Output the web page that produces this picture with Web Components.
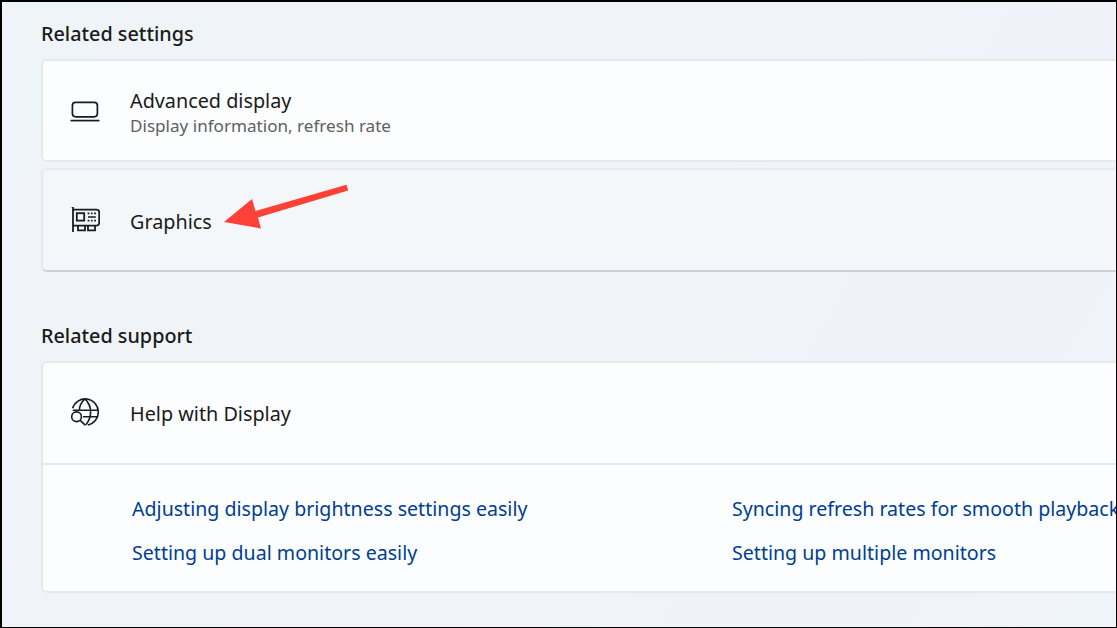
<!doctype html>
<html lang="en">
<head>
<meta charset="utf-8">
<title>Related settings</title>
<style>
  html, body { margin: 0; height: 100%; }
  body { overflow: hidden; font-family: "Noto Sans", "Open Sans", sans-serif; }
</style>
</head>
<body>
<settings-page>
  <section-title>Related settings</section-title>
  <setting-card>
    <setting-row title-text="Advanced display" sub-text="Display information, refresh rate">
      <svg slot="icon" viewBox="0 0 30 24" width="30" height="24" fill="none" stroke="#1b1b1b" stroke-width="1.7">
        <rect x="2.4" y="3.4" width="25" height="14.4" rx="3.2"/>
        <path d="M0.5 21.6H29.5"/>
      </svg>
    </setting-row>
  </setting-card>
  <setting-card class="hovered">
    <setting-row title-text="Graphics" class="nudge">
      <svg slot="icon" viewBox="0 2 30 28" width="30" height="28" fill="none" stroke="#1b1b1b" stroke-width="1.8">
        <path d="M0.5 1.4H3V27"/>
        <path d="M3 4.6H26.5Q29.2 4.6 29.2 7.4V18Q29.2 20.6 26.5 20.6H3"/>
        <path d="M8 20.6V25.4H15V20.6M18 20.6V25.4H25V20.6"/>
        <rect x="6.8" y="8.2" width="7.4" height="7.4"/>
        <path d="M17.6 8.4H19.4M21 8.4H22.6M24.2 8.4H26M18 12H25.8M17.6 15.6H19.4M21 15.6H22.6M24.2 15.6H26" stroke-width="1.7"/>
      </svg>
    </setting-row>
  </setting-card>
  <section-title class="second">Related support</section-title>
  <setting-card>
    <setting-row title-text="Help with Display">
      <svg slot="icon" viewBox="0 1 32 30" width="32" height="30" fill="none" stroke="#1b1b1b" stroke-width="1.7">
        <path d="M2.8 11A14 14 0 1 1 19 28.7"/>
        <path d="M16 1C12 4.5 10 9 10 13.5M16 1C20 5 22 10 22 15C22 20 20 25 17 28.5"/>
        <path d="M3 13H29.8M14 20H29.6"/>
        <circle cx="7" cy="20" r="5.2"/>
        <path d="M10.8 23.8L16.5 29.2"/>
      </svg>
    </setting-row>
    <link-grid>
      <a href="#">Adjusting display brightness settings easily</a>
      <a href="#">Syncing refresh rates for smooth playback</a>
      <a href="#">Setting up dual monitors easily</a>
      <a href="#">Setting up multiple monitors</a>
    </link-grid>
  </setting-card>
  <svg id="arrow" viewBox="0 0 1117 628" width="1117" height="628" aria-hidden="true">
    <path d="M346.5 184.8L348.2 190.6L258 217.5L261 228.5L224 222L252 199L255.5 211Z" fill="#fe4136"/>
  </svg>
</settings-page>

<script>
  /**
   * Defines a custom element from a piece of shadow markup.
   *
   * @param {string} name - The tag name.
   * @param {string} markup - The shadow root content.
   * @returns {void}
   */
  function define (name, markup) {
    const template = document.createElement('template')
    template.innerHTML = markup

    customElements.define(name, class extends HTMLElement {
      /**
       * Attaches the shadow root.
       */
      constructor () {
        super()
        this.attachShadow({ mode: 'open' }).appendChild(template.content.cloneNode(true))
      }
    })
  }

  define('settings-page', `
    <style>
      :host {
        display: block;
        position: relative;
        box-sizing: border-box;
        width: 1117px;
        height: 628px;
        padding: 17px 0 0 39px;
        overflow: hidden;
        border: solid #000;
        border-width: 2px 1px 1px 2px;
        background: linear-gradient(120deg, #eff4f8 0%, #f0f4f9 55%, #eff3fa 100%);
      }
      ::slotted(#arrow) { position: absolute; left: -2px; top: -2px; }
    </style>
    <slot></slot>
  `)

  define('section-title', `
    <style>
      :host {
        display: block;
        height: 40px;
        font-size: 19.8px;
        line-height: 30px;
        font-weight: 500;
        color: #1a1a1a;
        white-space: nowrap;
      }
      :host(.second) { margin-top: 51px; height: 38px; line-height: 26px; }
    </style>
    <slot></slot>
  `)

  define('setting-card', `
    <style>
      :host {
        display: block;
        box-sizing: border-box;
        width: 1120px;
        margin-bottom: 6px;
        background: #fcfdfe;
        border: 2px solid #e5e9ee;
        border-radius: 6px;
      }
      :host(.hovered) { background: #f4f7fa; border-color: #e6e9ed #e6e9ed #cdd0d4; }
    </style>
    <slot></slot>
  `)

  class SettingRow extends HTMLElement {
    /**
     * Builds the row from its attributes.
     */
    constructor () {
      super()
      this.attachShadow({ mode: 'open' }).innerHTML = `
        <style>
          :host {
            display: flex;
            align-items: center;
            box-sizing: border-box;
            height: 99px;
            padding-left: 27px;
            color: #1a1a1a;
          }
          :host(.nudge) { height: 100px; padding-top: 2px; }
          :host(:not([sub-text]):not(.nudge)) { height: 100px; }
          .icon { display: flex; justify-content: center; width: 30px; margin-right: 30px; }
          .text { padding-top: 5px; }
          .title { font-size: 19.8px; line-height: 25px; white-space: nowrap; }
          .sub { font-size: 17.1px; line-height: 25px; color: #5f5f5f; white-space: nowrap; }
          .text.single { padding-top: 0; }
        </style>
        <div class="icon"><slot name="icon"></slot></div>
        <div class="text ${this.hasAttribute('sub-text') ? '' : 'single'}">
          <div class="title">${this.getAttribute('title-text')}</div>
          ${this.hasAttribute('sub-text') ? `<div class="sub">${this.getAttribute('sub-text')}</div>` : ''}
        </div>
      `
    }
  }
  customElements.define('setting-row', SettingRow)

  define('link-grid', `
    <style>
      :host {
        display: grid;
        grid-template-columns: 600px 600px;
        grid-auto-rows: 44px;
        align-items: center;
        height: 128px;
        box-sizing: border-box;
        padding: 21px 0 0 89px;
        border-top: 2px solid #e5e9ee;
        font-size: 19.6px;
        white-space: nowrap;
      }
      ::slotted(a) { color: #003e92; text-decoration: none; }
    </style>
    <slot></slot>
  `)
</script>
</body>
</html>
